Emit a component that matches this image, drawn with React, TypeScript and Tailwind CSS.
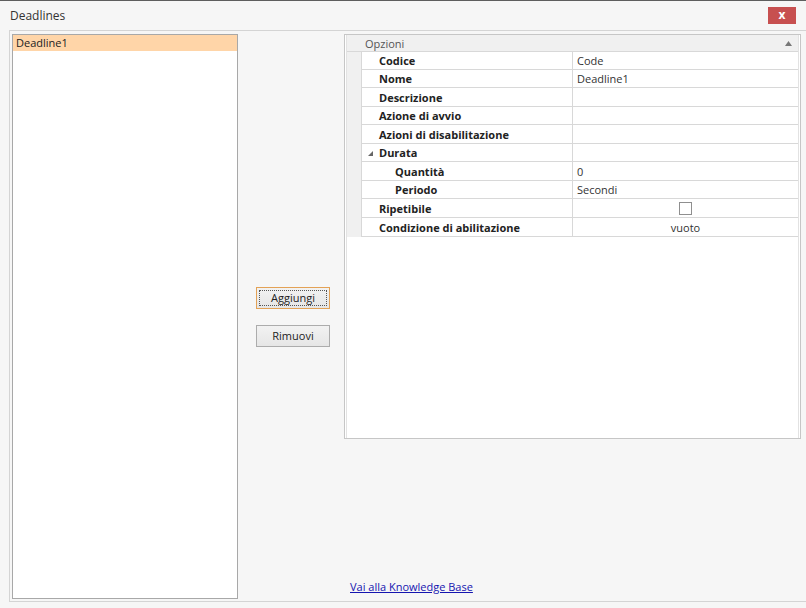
import React from "react";

type Row = { label: string; value?: string; h: string; indent?: boolean; expander?: boolean; kind?: "check" | "center" };

const rows: Row[] = [
  { label: "Codice", value: "Code", h: "h-[18px]" },
  { label: "Nome", value: "Deadline1", h: "h-[18px]" },
  { label: "Descrizione", h: "h-[19px]" },
  { label: "Azione di avvio", h: "h-[18px]" },
  { label: "Azioni di disabilitazione", h: "h-[19px]" },
  { label: "Durata", h: "h-[18px]", expander: true },
  { label: "Quantità", value: "0", h: "h-[19px]", indent: true },
  { label: "Periodo", value: "Secondi", h: "h-[18px]", indent: true },
  { label: "Ripetibile", h: "h-[19px]", kind: "check" },
  { label: "Condizione di abilitazione", value: "vuoto", h: "h-[19px]", kind: "center" },
];

export default function App() {
  return (
    <div
      className="w-[806px] h-[608px] bg-[#f6f6f6] border-t border-[#5e5e5e] flex flex-col overflow-hidden text-[#222]"
      style={{ fontFamily: '"Open Sans", "Noto Sans", sans-serif' }}
    >
      {/* title bar */}
      <div className="h-[29px] flex items-center justify-between pl-[10px] pr-[10px] shrink-0">
        <span className="text-[12px] text-[#333] leading-none pt-[1px]">Deadlines</span>
        <div className="w-[28px] h-[17px] bg-[#c75050] flex items-center justify-center text-white text-[12px] font-bold leading-none mb-[1px]">
          x
        </div>
      </div>

      {/* body frame */}
      <div className="ml-[9px] h-[572px] border-l border-t border-b border-[#d4d4d4] flex pl-[2px] pt-[3px] pb-[2px]">
        {/* list */}
        <div className="w-[226px] h-[565px] bg-white border border-[#a8a8a8] shrink-0">
          <div className="h-[16px] bg-[#ffd5a8] text-[11px] leading-[16px] pl-[3px] text-[#222]">Deadline1</div>
        </div>

        {/* buttons */}
        <div className="ml-[18px] w-[74px] pt-[253px] flex flex-col shrink-0">
          <div className="h-[22px] border border-[#e3a256] bg-gradient-to-b from-[#f2f2f2] to-[#e6e6e6] p-[2px]">
            <div className="h-full border border-dotted border-[#555] flex items-center justify-center text-[11px] text-[#222]">
              Aggiungi
            </div>
          </div>
          <div className="mt-[16px] h-[22px] border border-[#acacac] bg-gradient-to-b from-[#f2f2f2] to-[#e6e6e6] flex items-center justify-center text-[11px] text-[#222]">
            Rimuovi
          </div>
        </div>

        {/* property grid + link */}
        <div className="ml-[14px] w-[457px] flex flex-col">
          <div className="h-[405px] border border-[#c6c6c6] bg-white px-px">
            <div className="h-full border-x border-[#e2e2e2] bg-white flex flex-col">
              <div className="h-[17px] bg-[#f0f0f0] flex items-center justify-between pl-[18px] pr-[6px] border-b border-[#d8d8d8]">
                <span className="text-[11px] text-[#555] leading-none">Opzioni</span>
                <svg width="7" height="5" viewBox="0 0 7 5">
                  <path d="M0 5 L3.5 0 L7 5 Z" fill="#777" />
                </svg>
              </div>
              {rows.map((r) => (
                <div key={r.label} className={`${r.h} flex`}>
                  <div className="w-[15px] bg-[#f0f0f0] border-r border-[#d8d8d8] shrink-0" />
                  <div className="w-[211px] shrink-0 border-r border-b border-[#d8d8d8] flex items-center relative">
                    {r.expander && (
                      <svg className="absolute left-[6px] top-[7px]" width="5" height="5" viewBox="0 0 5 5">
                        <path d="M5 0 L5 5 L0 5 Z" fill="#666" />
                      </svg>
                    )}
                    <span className={`text-[11px] font-bold leading-none ${r.indent ? "pl-[33px]" : "pl-[17px]"}`}>
                      {r.label}
                    </span>
                  </div>
                  <div
                    className={`flex-1 border-b border-[#d8d8d8] flex items-center text-[11px] text-[#333] ${
                      r.kind === "check" || r.kind === "center" ? "justify-center" : "pl-[4px]"
                    }`}
                  >
                    {r.kind === "check" ? (
                      <div className="w-[13px] h-[13px] border border-[#8f8f8f] bg-white" />
                    ) : (
                      <span className="leading-none">{r.value ?? ""}</span>
                    )}
                  </div>
                </div>
              ))}
            </div>
          </div>
          <div className="mt-auto pb-[2px] pl-[6px]">
            <span className="text-[11px] text-[#1515b0] underline leading-[14px]">Vai alla Knowledge Base</span>
          </div>
        </div>
      </div>
    </div>
  );
}
